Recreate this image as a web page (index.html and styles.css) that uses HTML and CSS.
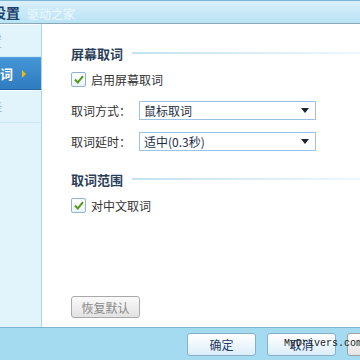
FILE: index.html
```html
<!DOCTYPE html>
<html lang="zh-CN">
<head>
  <meta charset="UTF-8">
  <title>设置</title>
  <link rel="stylesheet" href="styles.css">
</head>
<body>
  <div class="window">
    <div class="titlebar">
      <span class="title">设置</span>
      <span class="brand">驱动之家</span>
    </div>

    <div class="main">
      <div class="sidebar">
        <div class="nav-item"><span class="nav-label">常规设置</span></div>
        <div class="nav-item active"><span class="nav-label">屏幕取词</span><span class="nav-arrow"></span></div>
        <div class="nav-item"><span class="nav-label">划词翻译</span></div>
      </div>

      <div class="content">
        <div class="section-title"><span>屏幕取词</span></div>
        <label class="check-row"><span class="checkbox"><svg width="10" height="9" viewBox="0 0 10 9"><path d="M1 4.5 L3.8 7.5 L9 1.2" fill="none" stroke="#5a9a1a" stroke-width="2"/></svg></span>启用屏幕取词</label>

        <div class="field">
          <span class="field-label">取词方式：</span>
          <div class="select">鼠标取词<span class="caret"></span></div>
        </div>
        <div class="field">
          <span class="field-label">取词延时：</span>
          <div class="select">适中(0.3秒)<span class="caret"></span></div>
        </div>

        <div class="section-title second"><span>取词范围</span></div>
        <label class="check-row"><span class="checkbox"><svg width="10" height="9" viewBox="0 0 10 9"><path d="M1 4.5 L3.8 7.5 L9 1.2" fill="none" stroke="#5a9a1a" stroke-width="2"/></svg></span>对中文取词</label>

        <div class="spacer"></div>
        <button class="btn-reset">恢复默认</button>
      </div>
    </div>

    <div class="footer">
      <button class="btn">确定</button>
      <button class="btn">取消</button>
      <button class="btn btn-cut">应用</button>
      <span class="watermark">MyDrivers.com</span>
    </div>
  </div>
</body>
</html>
```

FILE: styles.css
```css
body {
  margin: 0;
  font-family: "Noto Sans CJK SC", "Liberation Sans", sans-serif;
  font-size: 12px;
  color: #333;
}

.window {
  width: 360px;
  height: 360px;
  display: flex;
  flex-direction: column;
  overflow: hidden;
  background: #fff;
}

/* barra de titulo */
.titlebar {
  height: 22px;
  border-top: 1px solid #7eb6d8;
  border-bottom: 1px solid #8aa7b8;
  background: linear-gradient(to bottom, #d9effa, #b9e3f5);
  display: flex;
  align-items: center;
  white-space: nowrap;
}
.title {
  margin-left: -8px;
  font-size: 14px;
  font-weight: bold;
  color: #1d3f6b;
  line-height: 22px;
}
.brand {
  margin-left: 7px;
  font-size: 12px;
  color: #eef8fd;
  line-height: 22px;
  padding-top: 4px;
}

.main {
  flex: 1;
  display: flex;
  min-height: 0;
}

/* menu lateral */
.sidebar {
  width: 41px;
  background: #e1f4fc;
  border-right: 1px solid #a8d6ec;
  overflow: hidden;
}
.nav-item {
  height: 31px;
  border-bottom: 1px solid #cbe8f6;
  border-top: 1px solid #f3fbff;
  display: flex;
  align-items: center;
  white-space: nowrap;
  color: #9ab8cc;
  font-size: 13px;
}
.nav-label {
  margin-left: -50px;
}
.nav-item.active {
  background: linear-gradient(to bottom, #4596d6, #2f7cc1);
  border-top-color: #5aa3dc;
  border-bottom-color: #2565a3;
  color: #fff;
  font-weight: bold;
}
.nav-item.active .nav-label {
  margin-left: -39px;
}
.nav-arrow {
  margin-left: 9px;
  width: 0;
  height: 0;
  border-top: 4px solid transparent;
  border-bottom: 4px solid transparent;
  border-left: 4px solid #f4b800;
}

/* conteudo */
.content {
  flex: 1;
  padding: 20px 0 9px 29px;
  display: flex;
  flex-direction: column;
  align-items: flex-start;
}
.section-title {
  display: flex;
  align-items: center;
  width: 100%;
  font-size: 13px;
  font-weight: bold;
  color: #2b3f5a;
  height: 18px;
}
.section-title::after {
  content: "";
  flex: 1;
  height: 2px;
  margin-left: 9px;
  background: linear-gradient(to right, #c4e2f1, #eef7fc);
}
.section-title.second {
  margin-top: 19px;
}

.check-row {
  display: flex;
  align-items: center;
  margin-top: 9px;
  height: 16px;
  color: #333;
}
.checkbox {
  width: 13px;
  height: 13px;
  border: 1px solid #8db4d4;
  border-radius: 2px;
  background: linear-gradient(to bottom, #fff, #eaf3fa);
  margin-right: 5px;
  display: flex;
  align-items: center;
  justify-content: center;
}

.field {
  display: flex;
  align-items: center;
  margin-top: 14px;
}
.field + .field {
  margin-top: 12px;
}
.field-label {
  width: 68px;
}
.select {
  width: 171px;
  height: 17px;
  border: 1px solid #9bc2e4;
  padding-left: 4px;
  line-height: 17px;
  display: flex;
  align-items: center;
  justify-content: space-between;
  color: #1e2e45;
}
.caret {
  width: 0;
  height: 0;
  margin-right: 6px;
  border-left: 4px solid transparent;
  border-right: 4px solid transparent;
  border-top: 5px solid #1a2330;
}

.spacer {
  flex: 1;
}
.btn-reset {
  width: 69px;
  height: 22px;
  border: 1px solid #a9a9a9;
  border-radius: 3px;
  background: linear-gradient(to bottom, #fafafa, #e2e2e2);
  color: #8a8a8a;
  font-family: inherit;
  font-size: 12px;
  padding: 0;
}

/* rodape */
.footer {
  height: 32px;
  border-top: 1px solid #7db5d5;
  background: #a4dbf1;
  display: flex;
  align-items: center;
  padding-left: 187px;
  gap: 11px;
  position: relative;
  overflow: hidden;
}
.btn {
  flex: none;
  width: 69px;
  height: 23px;
  border: 1px solid #86aecb;
  border-radius: 3px;
  background: linear-gradient(to bottom, #ffffff, #dceefa);
  color: #1d3a66;
  font-family: inherit;
  font-size: 12px;
  padding: 0;
}
.btn-cut {
  background: linear-gradient(to bottom, #ffffff, #e4e4e4);
  border-color: #a0a0a0;
  color: #555;
}
.watermark {
  position: absolute;
  left: 284px;
  top: 10px;
  font-family: "Liberation Mono", monospace;
  font-size: 10px;
  color: #222;
}
```
